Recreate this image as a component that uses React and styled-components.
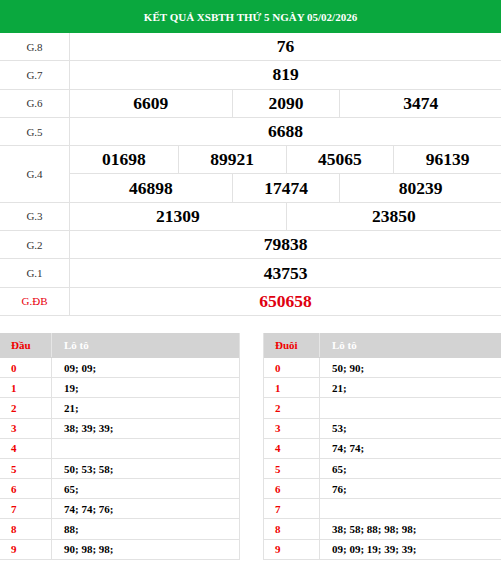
import styled, { createGlobalStyle } from "styled-components";

const GlobalStyle = createGlobalStyle`
    body {
        margin: 0;
        background: #fff;
        font-family: "Liberation Serif", "Times New Roman", serif;
    }
`;

const prizes = [
    { label: "G.8", rows: [[{ n: "76", span: 8 }]] },
    { label: "G.7", rows: [[{ n: "819", span: 8 }]] },
    { label: "G.6", rows: [[{ n: "6609", span: 3 }, { n: "2090", span: 2 }, { n: "3474", span: 3 }]] },
    { label: "G.5", rows: [[{ n: "6688", span: 8 }]] },
    {
        label: "G.4",
        rows: [
            [{ n: "01698", span: 2 }, { n: "89921", span: 2 }, { n: "45065", span: 2 }, { n: "96139", span: 2 }],
            [{ n: "46898", span: 3 }, { n: "17474", span: 2 }, { n: "80239", span: 3 }],
        ],
    },
    { label: "G.3", rows: [[{ n: "21309", span: 4 }, { n: "23850", span: 4 }]] },
    { label: "G.2", rows: [[{ n: "79838", span: 8 }]] },
    { label: "G.1", rows: [[{ n: "43753", span: 8 }]] },
    { label: "G.ĐB", special: true, rows: [[{ n: "650658", span: 8 }]] },
];

const dau = ["09; 09;", "19;", "21;", "38; 39; 39;", "", "50; 53; 58;", "65;", "74; 74; 76;", "88;", "90; 98; 98;"];
const duoi = ["50; 90;", "21;", "", "53;", "74; 74;", "65;", "76;", "", "38; 58; 88; 98; 98;", "09; 09; 19; 39; 39;"];

export default function App() {
    return (
        <Page>
            <GlobalStyle />
            <Title>KẾT QUẢ XSBTH THỨ 5 NGÀY 05/02/2026</Title>

            <ResultTable>
                {prizes.map((p) => (
                    <PrizeRow key={p.label}>
                        <PrizeLabel $special={p.special}>{p.label}</PrizeLabel>
                        <PrizeValues>
                            {p.rows.map((row, i) => (
                                <NumberLine key={i} $last={i === p.rows.length - 1}>
                                    {row.map((cell, j) => (
                                        <NumberCell key={j} $span={cell.span} $special={p.special}>
                                            {cell.n}
                                        </NumberCell>
                                    ))}
                                </NumberLine>
                            ))}
                        </PrizeValues>
                    </PrizeRow>
                ))}
            </ResultTable>

            <LotoWrap>
                <LotoTable head="Đầu" keyWidth={52} side="left" items={dau} />
                <LotoTable head="Đuôi" keyWidth={56} side="right" items={duoi} />
            </LotoWrap>
        </Page>
    );
}

function LotoTable({ head, keyWidth, side, items }) {
    return (
        <Loto $side={side}>
            <LotoRow $header>
                <KeyCell $w={keyWidth} $header>{head}</KeyCell>
                <ValueCell $header>Lô tô</ValueCell>
            </LotoRow>
            {items.map((v, i) => (
                <LotoRow key={i}>
                    <KeyCell $w={keyWidth}>{i}</KeyCell>
                    <ValueCell>{v}</ValueCell>
                </LotoRow>
            ))}
        </Loto>
    );
}

const Page = styled.div`
    width: 501px;
`;

const Title = styled.div`
    height: 33px;
    background: #0aa83e;
    color: #fff;
    font-weight: bold;
    font-size: 11px;
    display: flex;
    align-items: center;
    justify-content: center;
`;

const ResultTable = styled.div`
    display: flex;
    flex-direction: column;
`;

const PrizeRow = styled.div`
    display: flex;
    border-bottom: 1px solid #e2e2e2;
`;

const PrizeLabel = styled.div`
    width: 69px;
    flex-shrink: 0;
    border-right: 1px solid #e2e2e2;
    display: flex;
    align-items: center;
    justify-content: center;
    font-size: 11px;
    color: ${(p) => (p.$special ? "#e8000b" : "#333")};
`;

const PrizeValues = styled.div`
    flex: 1;
    display: flex;
    flex-direction: column;
`;

const NumberLine = styled.div`
    display: grid;
    grid-template-columns: repeat(8, 1fr);
    height: ${(p) => (p.$last ? "27.3px" : "28.3px")};
    border-bottom: ${(p) => (p.$last ? "none" : "1px solid #e2e2e2")};
    box-sizing: border-box;
`;

const NumberCell = styled.div`
    grid-column: span ${(p) => p.$span};
    display: flex;
    align-items: center;
    justify-content: center;
    font-weight: bold;
    font-size: 17.5px;
    color: ${(p) => (p.$special ? "#e00010" : "#000")};
    & + & {
        border-left: 1px solid #e2e2e2;
    }
`;

const LotoWrap = styled.div`
    display: flex;
    justify-content: space-between;
    margin-top: 17px;
`;

const Loto = styled.div`
    width: ${(p) => (p.$side === "left" ? "240px" : "238px")};
    box-sizing: border-box;
    border-${(p) => (p.$side === "left" ? "right" : "left")}: 1px solid #e2e2e2;
    display: flex;
    flex-direction: column;
`;

const LotoRow = styled.div`
    display: flex;
    height: ${(p) => (p.$header ? "25px" : "20.2px")};
    box-sizing: border-box;
    background: ${(p) => (p.$header ? "#d3d3d3" : "#fff")};
    border-bottom: 1px solid ${(p) => (p.$header ? "#d3d3d3" : "#e2e2e2")};
    font-weight: bold;
    font-size: 11px;
`;

const KeyCell = styled.div`
    width: ${(p) => p.$w}px;
    flex-shrink: 0;
    box-sizing: border-box;
    padding-left: 11px;
    display: flex;
    align-items: center;
    color: #f00000;
    border-right: 1px solid ${(p) => (p.$header ? "#e6e6e6" : "#e2e2e2")};
`;

const ValueCell = styled.div`
    flex: 1;
    padding-left: 12px;
    display: flex;
    align-items: center;
    color: ${(p) => (p.$header ? "#fff" : "#000")};
`;
